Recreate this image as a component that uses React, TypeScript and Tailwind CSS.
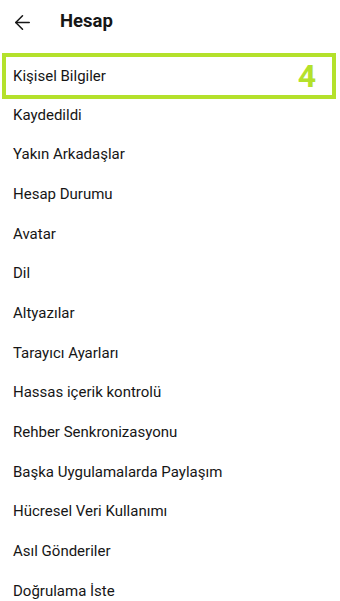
import { ArrowLeft } from 'lucide-react';

const items = [
  'Kaydedildi',
  'Yakın Arkadaşlar',
  'Hesap Durumu',
  'Avatar',
  'Dil',
  'Altyazılar',
  'Tarayıcı Ayarları',
  'Hassas içerik kontrolü',
  'Rehber Senkronizasyonu',
  'Başka Uygulamalarda Paylaşım',
  'Hücresel Veri Kullanımı',
  'Asıl Gönderiler',
  'Doğrulama İste',
];

export default function App() {
  return (
    <div className="w-[340px] h-[601px] overflow-hidden bg-white text-[#161616]" style={{ fontFamily: 'Roboto, "Noto Sans", sans-serif' }}>
      <div className="h-[44px] flex items-center">
        <ArrowLeft className="ml-[11px] w-[23px] h-[23px]" strokeWidth={1.6} />
        <span className="ml-[26px] text-[18.5px] font-bold">Hesap</span>
      </div>
      <div className="mt-[9px] ml-[2px] mr-[4px] h-[46px] border-[4px] border-[#b4e12b] flex items-center justify-between">
        <span className="pl-[7px] text-[15px]">Kişisel Bilgiler</span>
        <span className="pr-[16px] text-[32px] font-bold text-[#b4e12b] leading-none">4</span>
      </div>
      <div className="mt-[-4px] flex flex-col">
        {items.map((t) => (
          <div key={t} className="h-[39.7px] shrink-0 flex items-center px-[13px] text-[15px]">
            {t}
          </div>
        ))}
      </div>
    </div>
  );
}
